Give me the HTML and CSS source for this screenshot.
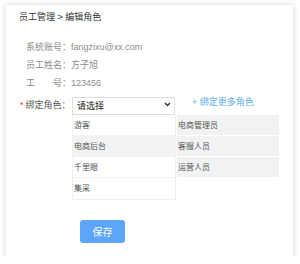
FILE: index.html
```html
<!DOCTYPE html>
<html lang="zh-CN">
<head>
    <meta charset="UTF-8">
    <meta name="viewport" content="width=device-width, initial-scale=1.0">
    <title>编辑角色</title>
    <link rel="stylesheet" href="styles.css">
</head>
<body>
    <div class="card">
        <div class="crumb">员工管理 &gt; 编辑角色</div>

        <div class="info">
            <div class="info-line"><span class="key">系统账号：</span>fangzixu@xx.com</div>
            <div class="info-line"><span class="key">员工姓名：</span>方子旭</div>
            <div class="info-line"><span class="key">工<span class="sp"></span>号：</span>123456</div>
        </div>

        <div class="role-row">
            <label class="role-label"><span class="req">*</span>绑定角色：</label>
            <div class="select-wrap">
                <select class="role-select">
                    <option>请选择</option>
                </select>
                <svg class="chevron" width="7" height="5" viewBox="0 0 7 5">
                    <path d="M1 1 L3.5 3.5 L6 1" fill="none" stroke="#333" stroke-width="1.4"/>
                </svg>
            </div>
            <a class="more" href="#">+ 绑定更多角色</a>
        </div>

        <div class="roles">
            <ul class="col col-left">
                <li>游客</li>
                <li class="hover">电商后台</li>
                <li>千里眼</li>
                <li>集采</li>
            </ul>
            <ul class="col col-right">
                <li>电商管理员</li>
                <li>客服人员</li>
                <li>运营人员</li>
            </ul>
        </div>

        <button class="save" type="button">保存</button>
    </div>
</body>
</html>
```

FILE: styles.css
```css
body { margin: 0; padding: 5px 7px 0 6px; background: #fff; font-family: "Liberation Sans", "Noto Sans CJK SC", sans-serif; }
.card { height: 252px; background: #fff; box-shadow: 0 0 6px rgba(0, 0, 0, 0.18); padding-top: 2px; box-sizing: border-box; }
.crumb { height: 20px; line-height: 20px; padding-left: 13px; font-size: 9px; color: #333; }
.info { margin-top: 11px; padding-left: 20px; }
.info-line { height: 18px; line-height: 18px; font-size: 9px; color: #8c8c8c; }
.sp { display: inline-block; width: 18px; }
.role-row { display: flex; align-items: center; margin-top: 3px; height: 18px; padding-left: 14px; }
.role-label { width: 52px; font-size: 9px; color: #555; }
.req { color: #e33; margin-right: 2px; }
.select-wrap { position: relative; width: 103px; height: 18px; }
.role-select { appearance: none; -webkit-appearance: none; width: 100%; height: 18px; margin: 0; padding: 0 0 0 4px; border: 1px solid #ddd; border-radius: 0; background: #fff; font-family: inherit; font-size: 9px; color: #222; }
.chevron { position: absolute; right: 4px; top: 7px; }
.more { margin-left: 17px; margin-top: -5px; font-size: 9px; color: #5aaee8; text-decoration: none; }
.roles { display: flex; gap: 1px; margin: 2px 0 0 66px; }
.col { list-style: none; margin: 0; padding: 0; width: 102px; }
.col li { height: 21px; line-height: 21px; font-size: 8px; color: #555; padding-left: 1px; box-sizing: border-box; }
.col-left { border: 1px solid #f0f0f0; border-top: none; }
.col-left li { border-bottom: 1px solid #f3f3f3; }
.col-left li:last-child { border-bottom: none; }
.col-left .hover { background: #f2f2f2; }
.col-right li { background: #f2f2f2; border-bottom: 1px solid #fff; }
.save { display: block; margin: 20px 0 0 74px; width: 45px; height: 23px; padding: 0; background: #5ca5f8; color: #fff; border: none; border-radius: 3px; font-family: inherit; font-size: 10px; cursor: pointer; }
```
